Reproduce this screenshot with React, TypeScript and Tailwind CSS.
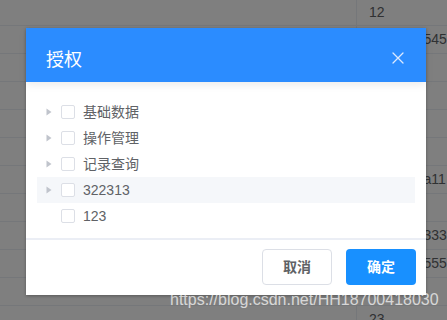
import React from "react";

const FONT = "font-['Liberation_Sans','Noto_Sans_CJK_SC',sans-serif]";

type TableRow = { value: string; height: string };

const TABLE_ROWS: TableRow[] = [
  { value: "12", height: "h-[26px]" },
  { value: "4545454545", height: "h-[28px]" },
  { value: "", height: "h-[28px]" },
  { value: "", height: "h-[28px]" },
  { value: "", height: "h-[28px]" },
  { value: "", height: "h-[28px]" },
  { value: "aaaaaaaa11", height: "h-[28px]" },
  { value: "", height: "h-[28px]" },
  { value: "3333334333", height: "h-[28px]" },
  { value: "5555555555", height: "h-[28px]" },
  { value: "", height: "h-[28px]" },
  { value: "23", height: "h-[28px]" },
];

type TreeNode = { label: string; hasChildren: boolean; hovered?: boolean };

const TREE: TreeNode[] = [
  { label: "基础数据", hasChildren: true },
  { label: "操作管理", hasChildren: true },
  { label: "记录查询", hasChildren: true },
  { label: "322313", hasChildren: true, hovered: true },
  { label: "123", hasChildren: false },
];

function CloseIcon() {
  return (
    <svg width="16" height="16" viewBox="0 0 16 16" fill="none">
      <path d="M3 3L13 13M13 3L3 13" stroke="#dbe9ff" strokeWidth="1.3" strokeLinecap="round" />
    </svg>
  );
}

function CaretRight() {
  return (
    <svg width="6" height="8" viewBox="0 0 6 8">
      <path d="M0.5 0.5L5.5 4L0.5 7.5Z" fill="#c0c4cc" />
    </svg>
  );
}

export default function App() {
  return (
    <div className={`relative h-[320px] w-[447px] overflow-hidden bg-white ${FONT}`}>
      {/* Table behind the mask */}
      <div className="flex flex-col">
        {TABLE_ROWS.map((row, i) => (
          <div key={i} className={`grid shrink-0 grid-cols-[357px_1fr] border-b border-[#ebeef5] ${row.height}`}>
            <div className="border-r border-[#ebeef5]" />
            <div className="flex items-center overflow-hidden whitespace-nowrap pl-[12px] text-[14px] text-[#606266]">
              {row.value}
            </div>
          </div>
        ))}
      </div>

      {/* Mask */}
      <div className="absolute inset-0 bg-black/50" />

      {/* Dialog */}
      <div className="absolute left-[26px] top-[28px] flex w-[400px] flex-col bg-white shadow-[0_1px_3px_rgba(0,0,0,0.3)]">
        <div className="relative z-10 h-[54px] bg-[#2b8cff] px-[20px] pb-[10px] pt-[20px] shadow-[0_3px_8px_rgba(0,0,0,0.08)]">
          <span className="text-[18px] leading-[24px] text-white">授权</span>
          <button type="button" className="absolute right-[20px] top-[22px] flex h-[16px] w-[16px] items-center justify-center">
            <CloseIcon />
          </button>
        </div>

        <div className="border-b-2 border-[#ebeef5] pb-[9px] pl-[11px] pr-[11px] pt-[17px]">
          {TREE.map((node) => (
            <div
              key={node.label}
              className={`flex h-[26px] items-center text-[14px] text-[#606266] ${node.hovered ? "bg-[#f5f7fa]" : ""}`}
            >
              <span className="flex w-[24px] justify-center">{node.hasChildren && <CaretRight />}</span>
              <span className="h-[14px] w-[14px] rounded-[2px] border border-[#dcdfe6] bg-white" />
              <span className="ml-[8px]">{node.label}</span>
            </div>
          ))}
        </div>

        <div className="flex h-[55px] justify-end gap-[14px] pr-[10px] pt-[9px]">
          <button
            type="button"
            className="h-[36px] w-[70px] rounded-[4px] border border-[#dcdfe6] bg-white text-[14px] font-bold text-[#606266]"
          >
            取消
          </button>
          <button type="button" className="h-[36px] w-[70px] rounded-[4px] bg-[#1890ff] text-[14px] font-bold text-white">
            确定
          </button>
        </div>
      </div>

      {/* Watermark */}
      <div className="absolute left-[170px] top-[292px] text-[16px] leading-[16px] whitespace-nowrap text-white/70">
        https://blog.csdn.net/HH18700418030
      </div>
    </div>
  );
}
